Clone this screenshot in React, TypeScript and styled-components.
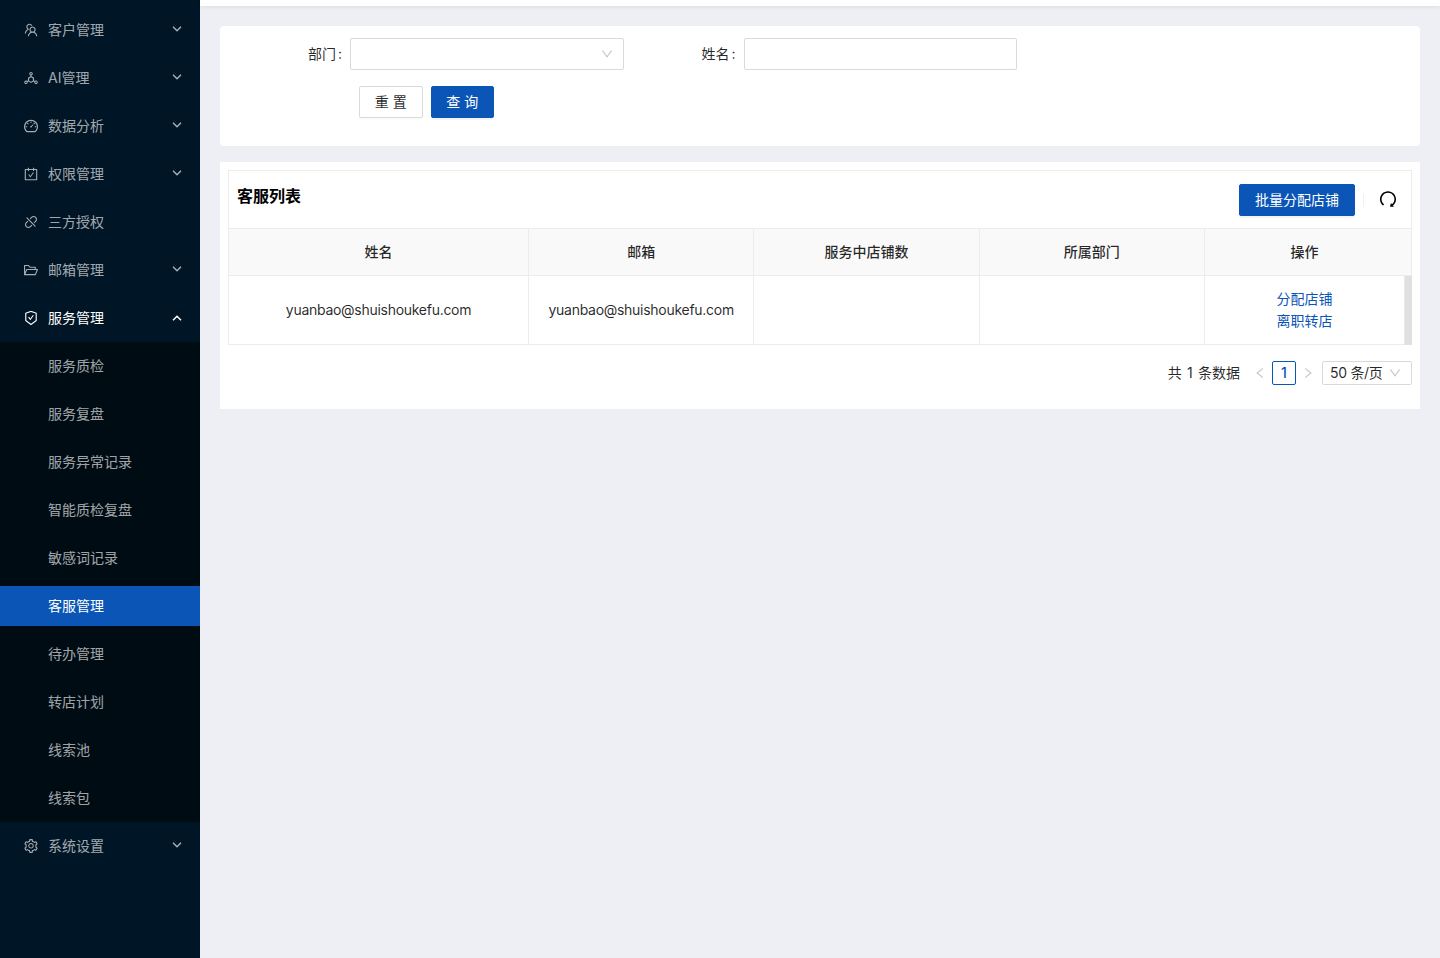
import React from 'react';
import styled, { createGlobalStyle, css } from 'styled-components';
import {
  AiOutlineTeam,
  AiOutlineDeploymentUnit,
  AiOutlineDashboard,
  AiOutlineCarryOut,
  AiOutlineDisconnect,
  AiOutlineFolderOpen,
  AiOutlineSafetyCertificate,
  AiOutlineSetting,
  AiOutlineRedo,
  AiOutlineDown,
  AiOutlineLeft,
  AiOutlineRight,
} from 'react-icons/ai';

const PRIMARY = '#0b55b7';
const LINE = '#ececec';
const ICON_BOX = '64 64 896 896';

const GlobalStyle = createGlobalStyle`
  *, *::before, *::after { box-sizing: border-box; }
  body {
    margin: 0;
    background: #eeeff4;
    color: rgba(0, 0, 0, 0.85);
    font: 14px/22px Inter, 'Noto Sans CJK SC', sans-serif;
    overflow: hidden;
  }
  button, input { font: inherit; }
`;

const Layout = styled.div`
  display: flex;
  height: 958px;
`;

const Sidebar = styled.nav`
  display: flex;
  flex-direction: column;
  flex: none;
  width: 200px;
  padding-top: 6px;
  background: #001525;
`;

const MenuRow = styled.div<{ $active?: boolean }>`
  display: flex;
  align-items: center;
  height: 40px;
  margin: 4px 0;
  padding: 0 18px 0 24px;
  color: ${p => (p.$active ? '#fff' : 'rgba(255, 255, 255, 0.65)')};
  > svg:first-child { flex: none; margin-right: 10px; }
`;

const MenuLabel = styled.span`
  flex: 1;
`;

const MenuArrow = styled.svg<{ $open?: boolean }>`
  width: 10px;
  height: 6px;
  margin-top: -2px;
  fill: none;
  stroke: currentColor;
  stroke-width: 1.5;
  ${p => p.$open && css`transform: rotate(180deg); margin-top: 0;`}
`;

const SubMenu = styled.div`
  display: flex;
  flex-direction: column;
  gap: 8px;
  padding: 4px 0;
  background: #000c14;
`;

const SubItem = styled.div<{ $selected?: boolean }>`
  height: 40px;
  padding-left: 48px;
  line-height: 40px;
  color: ${p => (p.$selected ? '#fff' : 'rgba(255, 255, 255, 0.65)')};
  background: ${p => (p.$selected ? PRIMARY : 'transparent')};
`;

const Main = styled.main`
  flex: 1;
  min-width: 0;
`;

const TopBar = styled.header`
  height: 6px;
  background: #fff;
  box-shadow: 0 1px 4px rgba(0, 21, 41, 0.08);
`;

const Content = styled.div`
  display: flex;
  flex-direction: column;
  gap: 16px;
  padding: 20px;
`;

const FilterCard = styled.section`
  height: 120px;
  padding: 12px 0 0 88px;
  border-radius: 4px;
  background: #fff;
`;

const Fields = styled.div`
  display: flex;
  gap: 78px;
`;

const Field = styled.label`
  display: flex;
  align-items: center;
`;

const FieldLabel = styled.span`
  width: 42px;
  white-space: nowrap;
  &::after { content: ':'; margin-left: 2px; }
`;

const SelectBox = styled.div`
  display: flex;
  align-items: center;
  justify-content: flex-end;
  width: 273.5px;
  height: 32px;
  padding-right: 10px;
  border: 1px solid #d9d9d9;
  border-radius: 2px;
  color: rgba(0, 0, 0, 0.25);
`;

const TextInput = styled.input`
  width: 273px;
  height: 32px;
  padding: 0 11px;
  border: 1px solid #d9d9d9;
  border-radius: 2px;
  outline: none;
`;

const Actions = styled.div`
  display: flex;
  gap: 8px;
  margin-top: 16px;
  padding-left: 51px;
`;

const Button = styled.button<{ $primary?: boolean; $wide?: boolean }>`
  width: ${p => (p.$wide ? '116px' : '63.5px')};
  height: 32px;
  padding: 0;
  border: 1px solid ${p => (p.$primary ? PRIMARY : '#d9d9d9')};
  border-radius: 2px;
  background: ${p => (p.$primary ? PRIMARY : '#fff')};
  color: ${p => (p.$primary ? '#fff' : 'rgba(0, 0, 0, 0.85)')};
  box-shadow: 0 2px 0 rgba(0, 0, 0, ${p => (p.$primary ? 0.045 : 0.016)});
`;

const ListCard = styled.section`
  height: 247px;
  padding: 8px;
  background: #fff;
`;

const TableFrame = styled.div`
  height: 175px;
  border: 1px solid ${LINE};
`;

const TableHeader = styled.div`
  display: flex;
  justify-content: space-between;
  height: 57px;
  padding: 13px 14.5px 0 8px;
`;

const Title = styled.h2`
  margin: 0;
  font-size: 16px;
  line-height: 24px;
  font-weight: 600;
  color: #000;
`;

const Tools = styled.div`
  display: flex;
  align-items: center;
  height: 32px;
`;

const Divider = styled.i`
  width: 1px;
  height: 13px;
  margin: 1px 14.5px 0 8px;
  background: #f0f0f0;
`;

const RefreshIcon = styled(AiOutlineRedo)`
  margin-top: -2px;
  color: #000;
`;

const Row = styled.div<{ $head?: boolean }>`
  display: grid;
  grid-template-columns: 299px 225.4px 225.2px 225.4px 1fr;
  height: ${p => (p.$head ? '48px' : '68px')};
  ${p => p.$head && css`
    border: solid ${LINE};
    border-width: 1px 0;
    background: #f9f9f9;
    font-weight: 500;
  `}
`;

const Cell = styled.div`
  display: flex;
  flex-direction: column;
  align-items: center;
  justify-content: center;
  & + & { border-left: 1px solid ${LINE}; }
`;

const ActionCell = styled(Cell)`
  position: relative;
  padding-right: 7px;
`;

const Email = styled.span`
  letter-spacing: -0.28px;
`;

const Scrollbar = styled.i`
  position: absolute;
  top: 0;
  right: -1px;
  width: 8px;
  height: 69px;
  background: #e0e0e0;
  border-left: 1px solid #e9e9e9;
`;

const Link = styled.a`
  color: ${PRIMARY};
`;

const Pager = styled.div`
  display: flex;
  align-items: center;
  justify-content: flex-end;
  height: 24px;
  margin-top: 16px;
  > svg { color: rgba(0, 0, 0, 0.25); }
`;

const Total = styled.span`
  margin-right: 14px;
  word-spacing: 1.4px;
`;

const Page = styled.span`
  width: 24px;
  height: 24px;
  margin: 0 6px;
  border: 1px solid ${PRIMARY};
  border-radius: 2px;
  color: ${PRIMARY};
  font-weight: 500;
  text-align: center;
`;

const PageSize = styled.div`
  display: flex;
  align-items: center;
  justify-content: space-between;
  width: 90px;
  height: 24px;
  margin-left: 8px;
  padding: 0 10px 0 7px;
  border: 1px solid #d9d9d9;
  border-radius: 2px;
  letter-spacing: -0.3px;
  > svg { color: rgba(0, 0, 0, 0.25); }
`;

const Arrow = ({ open }: { open?: boolean }) => (
  <MenuArrow viewBox="0 0 10 6" $open={open}>
    <path d="M1 0.8 5 4.8 9 0.8" />
  </MenuArrow>
);

const menu = [
  { label: '客户管理', Icon: AiOutlineTeam, arrow: true },
  { label: 'AI管理', Icon: AiOutlineDeploymentUnit, arrow: true },
  { label: '数据分析', Icon: AiOutlineDashboard, arrow: true },
  { label: '权限管理', Icon: AiOutlineCarryOut, arrow: true },
  { label: '三方授权', Icon: AiOutlineDisconnect, arrow: false },
  { label: '邮箱管理', Icon: AiOutlineFolderOpen, arrow: true },
];

const subItems = [
  '服务质检', '服务复盘', '服务异常记录', '智能质检复盘', '敏感词记录',
  '客服管理', '待办管理', '转店计划', '线索池', '线索包',
];

export default function App() {
  return (
    <>
      <GlobalStyle />
      <Layout>
        <Sidebar>
          {menu.map(({ label, Icon, arrow }) => (
            <MenuRow key={label}>
              <Icon size={14} viewBox={ICON_BOX} />
              <MenuLabel>{label}</MenuLabel>
              {arrow && <Arrow />}
            </MenuRow>
          ))}
          <MenuRow $active>
            <AiOutlineSafetyCertificate size={14} viewBox={ICON_BOX} />
            <MenuLabel>服务管理</MenuLabel>
            <Arrow open />
          </MenuRow>
          <SubMenu>
            {subItems.map(label => (
              <SubItem key={label} $selected={label === '客服管理'}>{label}</SubItem>
            ))}
          </SubMenu>
          <MenuRow>
            <AiOutlineSetting size={14} viewBox={ICON_BOX} />
            <MenuLabel>系统设置</MenuLabel>
            <Arrow />
          </MenuRow>
        </Sidebar>
        <Main>
          <TopBar />
          <Content>
            <FilterCard>
              <Fields>
                <Field>
                  <FieldLabel>部门</FieldLabel>
                  <SelectBox><AiOutlineDown size={12} viewBox={ICON_BOX} /></SelectBox>
                </Field>
                <Field>
                  <FieldLabel>姓名</FieldLabel>
                  <TextInput />
                </Field>
              </Fields>
              <Actions>
                <Button>重 置</Button>
                <Button $primary>查 询</Button>
              </Actions>
            </FilterCard>
            <ListCard>
              <TableFrame>
                <TableHeader>
                  <Title>客服列表</Title>
                  <Tools>
                    <Button $primary $wide>批量分配店铺</Button>
                    <Divider />
                    <RefreshIcon size={18} viewBox={ICON_BOX} />
                  </Tools>
                </TableHeader>
                <Row $head>
                  <Cell>姓名</Cell>
                  <Cell>邮箱</Cell>
                  <Cell>服务中店铺数</Cell>
                  <Cell>所属部门</Cell>
                  <ActionCell>操作</ActionCell>
                </Row>
                <Row>
                  <Cell><Email>yuanbao@shuishoukefu.com</Email></Cell>
                  <Cell><Email>yuanbao@shuishoukefu.com</Email></Cell>
                  <Cell />
                  <Cell />
                  <ActionCell>
                    <Link>分配店铺</Link>
                    <Link>离职转店</Link>
                    <Scrollbar />
                  </ActionCell>
                </Row>
              </TableFrame>
              <Pager>
                <Total>共 1 条数据</Total>
                <AiOutlineLeft size={12} viewBox={ICON_BOX} />
                <Page>1</Page>
                <AiOutlineRight size={12} viewBox={ICON_BOX} />
                <PageSize>50 条/页<AiOutlineDown size={12} viewBox={ICON_BOX} /></PageSize>
              </Pager>
            </ListCard>
          </Content>
        </Main>
      </Layout>
    </>
  );
}
